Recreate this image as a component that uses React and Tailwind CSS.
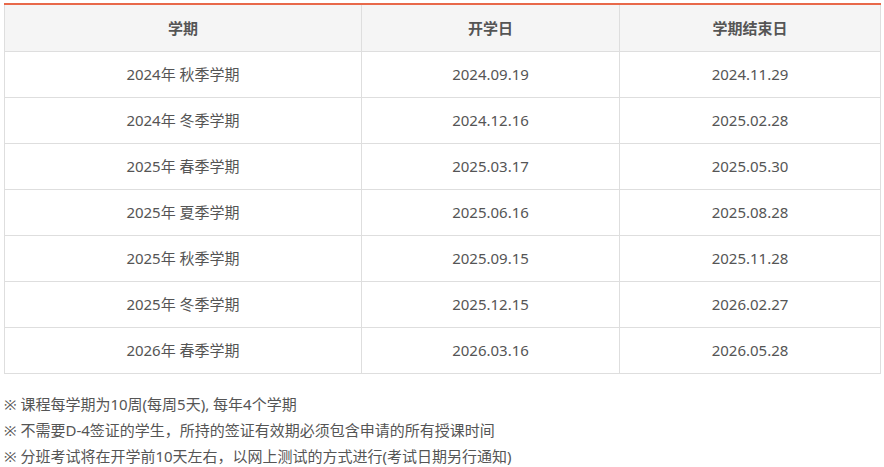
import React from "react";

const rows = [
  ["2024年 秋季学期", "2024.09.19", "2024.11.29"],
  ["2024年 冬季学期", "2024.12.16", "2025.02.28"],
  ["2025年 春季学期", "2025.03.17", "2025.05.30"],
  ["2025年 夏季学期", "2025.06.16", "2025.08.28"],
  ["2025年 秋季学期", "2025.09.15", "2025.11.28"],
  ["2025年 冬季学期", "2025.12.15", "2026.02.27"],
  ["2026年 春季学期", "2026.03.16", "2026.05.28"],
];

const notes = [
  "※ 课程每学期为10周(每周5天), 每年4个学期",
  "※ 不需要D-4签证的学生，所持的签证有效期必须包含申请的所有授课时间",
  "※ 分班考试将在开学前10天左右，以网上测试的方式进行(考试日期另行通知)",
];

const App = () => {
  return (
    <div className="w-[884px] h-[467px] bg-white pt-[3px] pl-[4px] text-[#555] font-['Noto_Sans','Noto_Sans_CJK_SC',sans-serif] text-[15px]">
      <table className="w-[876px] border-collapse table-fixed border-t-2 border-t-[#e8694a]">
        <colgroup>
          <col className="w-[357px]" />
          <col className="w-[258px]" />
          <col className="w-[261px]" />
        </colgroup>
        <thead>
          <tr className="bg-[#f5f5f5]">
            {["学期", "开学日", "学期结束日"].map((h) => (
              <th
                key={h}
                className="h-[47px] border-x border-b border-[#dedede] font-semibold text-center"
              >
                {h}
              </th>
            ))}
          </tr>
        </thead>
        <tbody>
          {rows.map((r) => (
            <tr key={r[0]}>
              {r.map((c, i) => (
                <td
                  key={i}
                  className="h-[46px] border border-[#dedede] text-center"
                >
                  {c}
                </td>
              ))}
            </tr>
          ))}
        </tbody>
      </table>

      <div className="mt-[17px] flex flex-col">
        {notes.map((n) => (
          <p key={n} className="leading-[26px]">
            {n}
          </p>
        ))}
      </div>
    </div>
  );
};

export default App;
